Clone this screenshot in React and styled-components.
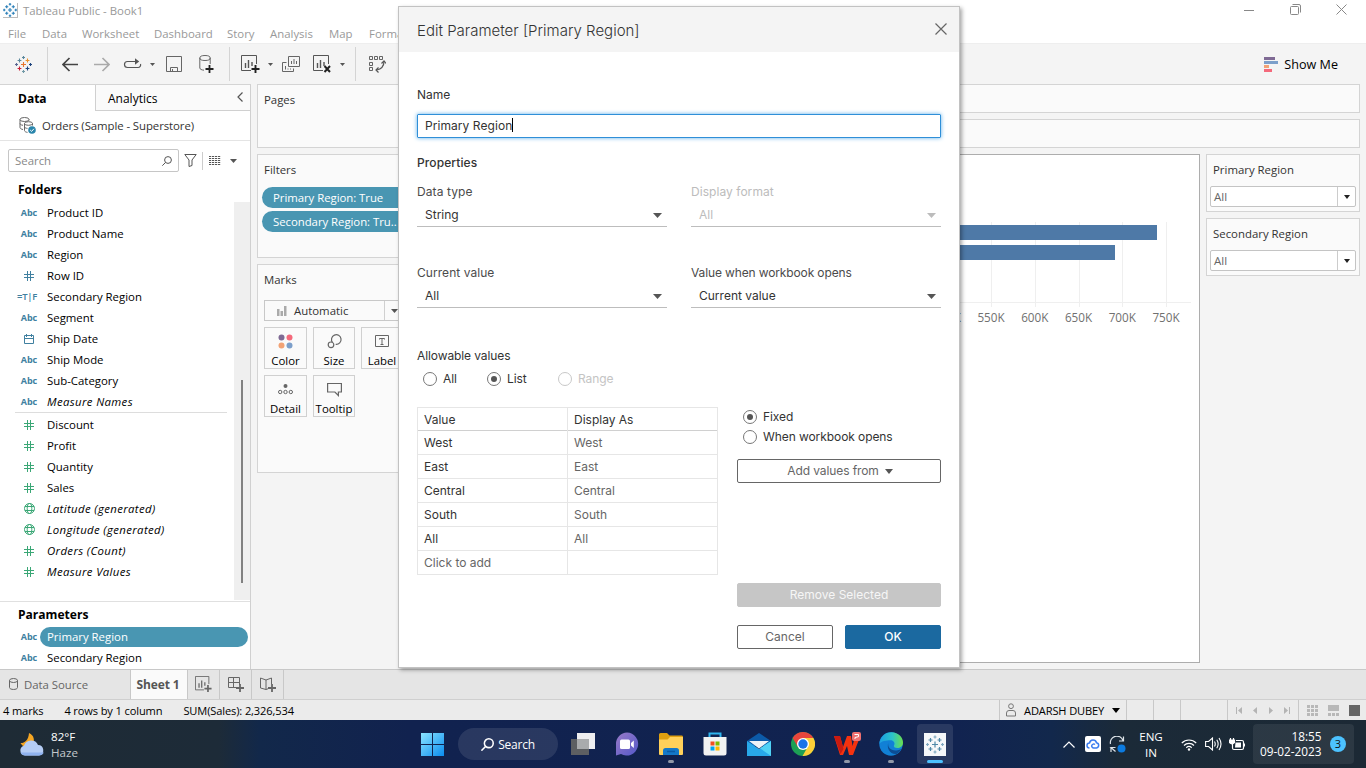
import React from "react";
import styled, { createGlobalStyle, css } from "styled-components";

const Global = createGlobalStyle`
  * { box-sizing: border-box; }
  html, body { margin: 0; padding: 0; overflow: hidden; }
  body { font-family: "Open Sans", "Noto Sans", sans-serif; font-size: 11.4px; color: #000; }
  svg { display: block; flex: none; }
`;

const Desktop = styled.div`
  position: relative;
  width: 1366px;
  height: 768px;
  display: flex;
  flex-direction: column;
  background: #f4f4f4;
  overflow: hidden;
  white-space: nowrap;
`;

/* ---------- window chrome ---------- */
const TitleBar = styled.div`
  height: 22px;
  background: #fff;
  display: flex;
  align-items: center;
  padding: 0 0 1px 3px;
  color: #999;
`;
const TitleIcon = styled.span`
  width: 15px;
  height: 15px;
  border-right: 1px solid #bbb;
  border-bottom: 1px solid #bbb;
  margin-right: 5px;
`;
const WindowButtons = styled.div`
  margin-left: auto;
  display: flex;
  padding: 0 2px 2px 0;
`;
const WindowButton = styled.span`
  width: 46px;
  height: 20px;
  display: flex;
  align-items: center;
  justify-content: center;
`;
const MenuBar = styled.div`
  height: 21px;
  background: #fff;
  display: grid;
  grid-template-columns: 34px 40px 72px 73px 43px 59px 40px 60px;
  align-items: center;
  padding: 2px 0 0 8px;
  color: #999;
`;
const ToolBar = styled.div`
  height: 41px;
  border-top: 1px solid #eee;
  display: flex;
  align-items: center;
`;
const Slot = styled.span`
  width: ${(p) => p.$w}px;
  display: flex;
  align-items: center;
  justify-content: center;
  flex: none;
`;
const ToolDivider = styled.span`
  width: 1px;
  height: 34px;
  margin: 0 ${(p) => p.$r || 0}px 0 ${(p) => p.$l || 0}px;
  background: #d4d4d4;
`;
const ShowMe = styled.div`
  margin-left: auto;
  display: flex;
  align-items: center;
  gap: 6px;
  padding-right: 28px;
  font-size: 12.6px;
`;

/* ---------- data pane ---------- */
const Body = styled.div`
  height: 585px;
  display: flex;
`;
const Side = styled.aside`
  width: 251px;
  background: #fff;
  border-right: 1px solid #d0d0d0;
  border-top: 1px solid #d4d4d4;
  display: flex;
  flex-direction: column;
`;
const SideTabs = styled.div`
  display: flex;
  height: 26px;
  font-size: 12px;
`;
const DataTab = styled.div`
  width: 95px;
  padding: 5px 0 0 18px;
  font-weight: 700;
  line-height: 17px;
`;
const AnalyticsTab = styled.div`
  flex: 1;
  padding: 5px 7px 0 12px;
  line-height: 17px;
  display: flex;
  justify-content: space-between;
  background: #fafafa;
  border-left: 1px solid #d0d0d0;
  border-bottom: 1px solid #d0d0d0;
  svg { margin-top: 2px; }
`;
const SourceRow = styled.div`
  height: 30px;
  border-bottom: 1px solid #e4e4e4;
  display: flex;
  align-items: center;
  gap: 6px;
  padding-left: 19px;
  color: #333;
  letter-spacing: -0.08px;
`;
const SearchRow = styled.div`
  display: flex;
  align-items: center;
  height: 23px;
  margin: 8px 0 0 8px;
`;
const SearchBox = styled.div`
  width: 171px;
  flex: none;
  height: 23px;
  border: 1px solid #c6c6c6;
  border-radius: 2px;
  display: flex;
  align-items: center;
  justify-content: space-between;
  padding: 0 6px;
  color: #888;
`;
const SmallDivider = styled.span`
  width: 1px;
  height: 18px;
  margin-right: 6px;
  background: #ccc;
`;
const PaneHeading = styled.div`
  font-weight: 700;
  font-size: 12.1px;
  letter-spacing: -0.02px;
  line-height: 20px;
  padding-left: 18px;
  margin-top: ${(p) => p.$mt}px;
`;
const FieldArea = styled.div`
  display: flex;
  justify-content: space-between;
  height: 399px;
  margin-top: 2px;
`;
const FieldList = styled.div`
  width: 227px;
`;
const ScrollTrack = styled.div`
  width: 16px;
  height: 398px;
  background: #efefef;
  padding: 178px 0 0 7px;
`;
const ScrollThumb = styled.div`
  width: 2px;
  height: 203px;
  background: #808080;
`;
const Field = styled.div`
  height: 21px;
  display: flex;
  align-items: center;
  font-style: ${(p) => (p.$italic ? "italic" : "normal")};
  letter-spacing: ${(p) => (p.$italic ? "0.36px" : "0")};
`;
const FieldIcon = styled.span`
  width: 46px;
  padding-left: 12px;
  display: flex;
  justify-content: center;
  color: ${(p) => (p.$green ? "#3ba776" : "#4080a0")};
  font: normal ${(p) => (p.$thin ? "600 9.5px" : "700 9px")} "Open Sans", sans-serif;
  letter-spacing: ${(p) => (p.$thin ? "-0.3px" : "0")};
  margin: 0 ${(p) => (p.$thin ? 3 : 1)}px 0 ${(p) => (p.$thin ? -2 : 0)}px;
`;
const FieldDivider = styled.div`
  height: 1px;
  margin: 0 0 1px 15px;
  background: #ddd;
`;
const ParamPane = styled.div`
  flex: 1;
  border-top: 1px solid #e0e0e0;
`;
const ParamRows = styled.div`
  padding-top: 1px;
`;
const SelectedPill = styled.span`
  width: 208px;
  height: 20px;
  line-height: 20px;
  margin-left: -7px;
  padding-left: 7px;
  border-radius: 10px;
  background: #4996b2;
  color: #fff;
`;

/* ---------- shelves ---------- */
const Shelves = styled.div`
  width: 153px;
  margin-left: 6px;
`;
const Card = styled.section`
  background: #fafafa;
  border: 1px solid #d4d4d4;
  height: ${(p) => p.$h}px;
  margin-bottom: 6px;
  color: #333;
`;
const CardTitle = styled.div`
  padding: 6px 0 0 6px;
  line-height: 18px;
`;
const Pills = styled.div`
  padding: 8px 0 0 4px;
  display: flex;
  flex-direction: column;
  gap: 3px;
`;
const Pill = styled.div`
  height: 21px;
  line-height: 21px;
  padding-left: 11px;
  border-radius: 11px 0 0 11px;
  background: #4996b2;
  color: #fff;
  letter-spacing: -0.05px;
`;
const MarkType = styled.div`
  margin: 11px 5px 6px 6px;
  height: 21px;
  border: 1px solid #c8c8c8;
  display: flex;
  align-items: center;
  padding-left: 12px;
`;
const MarkName = styled.span`
  flex: 1;
  padding-left: 7px;
  height: 19px;
  line-height: 19px;
`;
const MarkCaret = styled.span`
  width: 19px;
  height: 19px;
  border-left: 1px solid #d0d0d0;
  display: flex;
  align-items: center;
  justify-content: center;
`;
const MarkGrid = styled.div`
  display: grid;
  grid-template-columns: 43px 42px 42px;
  gap: 6px;
  margin-left: 6px;
`;
const MarkButton = styled.div`
  height: 42px;
  border: 1px solid #d0d0d0;
  display: flex;
  flex-direction: column;
  align-items: center;
  color: #000;
  padding-top: 5px;
  line-height: 20px;
  svg { margin-bottom: 2px; }
`;

/* ---------- sheet ---------- */
const Work = styled.div`
  width: 950px;
`;
const Shelf = styled.div`
  height: 29px;
  border: 1px solid #d4d4d4;
  background: #fafafa;
  margin-bottom: 6px;
`;
const SheetRow = styled.div`
  display: flex;
  gap: 6px;
`;
const View = styled.div`
  width: 790px;
  height: 509px;
  background: #fff;
  border: 1px solid #adadad;
`;
const AxisText = styled.text`
  font: 11.7px "Open Sans", sans-serif;
  fill: #707070;
  text-anchor: middle;
`;
const ParamCards = styled.div`
  width: 154px;
`;
const ParamCard = styled(Card)`
  height: 58px;
`;
const Combo = styled.div`
  margin: 7px 3px 0;
  height: 21px;
  border: 1px solid #c4c4c4;
  border-radius: 2px;
  background: #fff;
  display: flex;
  padding-left: 3px;
  line-height: 19px;
  font-size: 11.5px;
  color: #666;
`;
const ComboCaret = styled.span`
  margin-left: auto;
  width: 18px;
  border-left: 1px solid #ccc;
  display: flex;
  align-items: center;
  justify-content: center;
`;

/* ---------- sheet tabs and status ---------- */
const TabBar = styled.div`
  height: 30px;
  background: #e5e5e5;
  border-top: 1px solid #c8c8c8;
  display: flex;
`;
const SourceTab = styled.div`
  width: 130px;
  display: flex;
  align-items: center;
  gap: 6px;
  padding: 0 0 1px 9px;
  color: #666;
  font-size: 11.4px;
  letter-spacing: -0.05px;
`;
const SheetTab = styled.div`
  width: 58px;
  border: solid #c8c8c8;
  border-width: 0 1px;
  padding-right: 2px;
  background: #fafafa;
  line-height: 29px;
  text-align: center;
  font-weight: 700;
  font-size: 12px;
  letter-spacing: -0.15px;
  color: #555;
`;
const NewTab = styled.div`
  width: 32px;
  border-right: 1px solid #c8c8c8;
  display: flex;
  align-items: center;
  justify-content: center;
`;
const StatusBar = styled.div`
  height: 21px;
  border-top: 1px solid #cfcfcf;
  background: #ebebeb;
  display: flex;
  align-items: center;
  padding-left: 3px;
  gap: 21px;
  font-size: 11.1px;
  letter-spacing: -0.13px;
`;
const StatusCells = styled.div`
  margin-left: auto;
  display: flex;
  height: 20px;
`;
const StatusCell = styled.div`
  width: ${(p) => p.$w}px;
  border-left: 1px solid #c8c8c8;
  display: flex;
  align-items: center;
  padding-left: ${(p) => p.$pl || 0}px;
  gap: ${(p) => p.$gap || 0}px;
`;

/* ---------- taskbar ---------- */
const Taskbar = styled.div`
  height: 48px;
  display: flex;
  align-items: center;
  color: #fff;
  background: linear-gradient(90deg, #1e2b35 0, #1d2b38 16%, #12284a 19%, #11224f 30%, #112350 70%, #12284c 77%, #1b2a38 82%, #1c2935 100%);
`;
const Weather = styled.div`
  width: 410px;
  padding: 1px 0 0 19px;
  display: flex;
  gap: 6px;
  align-items: center;
  line-height: 16px;
  font-size: 11.6px;
`;
const Muted = styled.div`
  color: #c4c8cc;
`;
const TaskSearch = styled.div`
  width: 100px;
  height: 32px;
  margin: 0 3px 0 4px;
  border-radius: 16px;
  background: rgba(255, 255, 255, 0.1);
  display: flex;
  align-items: center;
  justify-content: center;
  gap: 4px;
  font-size: 12px;
  letter-spacing: -0.25px;
`;
const TaskItem = styled.div`
  width: 36px;
  height: 40px;
  margin: 0 4px;
  border-radius: 4px;
  position: relative;
  display: flex;
  align-items: center;
  justify-content: center;
  background: ${(p) => (p.$active ? "rgba(255,255,255,0.1)" : "none")};
  ${(p) =>
    p.$run &&
    css`
      &::after {
        content: "";
        position: absolute;
        left: 50%;
        bottom: 1px;
        width: ${p.$active ? 16 : 6}px;
        height: 3px;
        border-radius: 2px;
        transform: translateX(-50%);
        background: ${p.$active ? "#4cc2ff" : "#9098a8"};
      }
    `}
`;
const Tray = styled.div`
  margin-left: auto;
  display: flex;
  align-items: center;
`;
const TraySlot = styled(Slot)`
  padding-left: ${(p) => p.$shift || 0}px;
`;
const Lang = styled.div`
  width: 44px;
  text-align: center;
  line-height: 16px;
  padding-top: 1px;
  font-size: 11.6px;
`;
const ClockBox = styled.div`
  width: 101px;
  height: 40px;
  margin: 0 12px 0 4px;
  padding: 0 8px 0 7px;
  border-radius: 4px;
  background: rgba(255, 255, 255, 0.07);
  display: flex;
  align-items: center;
  justify-content: space-between;
  text-align: right;
  line-height: 15.5px;
  font-size: 11.8px;
`;
const Badge = styled.span`
  width: 16px;
  height: 16px;
  border-radius: 8px;
  background: #4cc2ff;
  color: #111;
  font-size: 11px;
  line-height: 16px;
  text-align: center;
`;

/* ---------- dialog ---------- */
const Dialog = styled.div`
  position: absolute;
  left: 398px;
  top: 6px;
  width: 562px;
  height: 662px;
  border: 1px solid #c2c2c2;
  background: #fff;
  box-shadow: 2px 2px 4px rgba(0, 0, 0, 0.35);
  font-family: Inter, Roboto, sans-serif;
  font-size: 12px;
  color: #333;
`;
const DialogHeader = styled.div`
  height: 45px;
  background: #f4f4f4;
  display: flex;
  align-items: center;
  justify-content: space-between;
  padding: 2px 12px 0 18px;
  font-size: 15px;
  font-weight: 300;
  svg { margin-top: -3px; }
`;
const DialogBody = styled.div`
  padding: 33px 18px 0;
`;
const Label = styled.div`
  height: 20px;
  line-height: ${(p) => (p.$strong ? 22 : 20)}px;
  color: ${(p) => (p.$disabled ? "#bcbcbc" : p.$soft ? "#4b4b4b" : "#333")};
  font-weight: ${(p) => (p.$strong ? 500 : 400)};
  letter-spacing: ${(p) => p.$ls || 0}px;
  margin-top: ${(p) => p.$mt || 0}px;
`;
const NameInput = styled.div`
  margin-top: 9px;
  height: 24px;
  border: 1px solid #2f8fd8;
  box-shadow: 0 0 4px #5fb0ea;
  border-radius: 1px;
  display: flex;
  align-items: center;
  padding: 0 0 2px 7px;
  letter-spacing: 0.06px;
`;
const Cursor = styled.span`
  width: 1px;
  height: 14px;
  background: #000;
`;
const Pair = styled.div`
  display: grid;
  grid-template-columns: 250px 250px;
  gap: 24px;
  margin-top: ${(p) => p.$mt}px;
`;
const Select = styled.div`
  height: 25px;
  border-bottom: 1px solid #bdbdbd;
  display: flex;
  align-items: center;
  justify-content: space-between;
  padding: 0 5px 0 8px;
  color: ${(p) => (p.$disabled ? "#bcbcbc" : "#333")};
  svg { margin-top: 2px; }
`;
const Radios = styled.div`
  display: flex;
  height: 16px;
  margin: 5px 0 0 6px;
`;
const Radio = styled.div`
  display: flex;
  align-items: center;
  gap: 6px;
  width: ${(p) => (p.$w ? p.$w + "px" : "auto")};
  height: ${(p) => p.$h || 16}px;
  color: ${(p) => (p.$disabled ? "#c4c4c4" : "#333")};
  padding-left: ${(p) => p.$pl || 0}px;
`;
const RadioText = styled.span`
  padding-bottom: 1px;
  letter-spacing: -0.08px;
`;
const RadioDot = styled.span`
  width: 14px;
  height: 14px;
  border-radius: 7px;
  border: 1px solid ${(p) => (p.$disabled ? "#c8c8c8" : "#777")};
  display: flex;
  align-items: center;
  justify-content: center;
  &::after {
    content: "";
    width: 6px;
    height: 6px;
    border-radius: 3px;
    background: ${(p) => (p.$on ? "#555" : "none")};
  }
`;
const Split = styled.div`
  display: flex;
  margin-top: 20px;
  justify-content: space-between;
`;
const ValueTable = styled.div`
  width: 301px;
  height: 168px;
  border: 1px solid #e6e6e6;
`;
const ValueRow = styled.div`
  display: grid;
  grid-template-columns: 149px 1fr;
  height: ${(p) => (p.$head ? 23 : 24)}px;
  border-bottom: 1px solid ${(p) => (p.$head ? "#d0d0d0" : "#e6e6e6")};
  line-height: 24px;
  &:last-child { border-bottom: 0; height: 23px; }
`;
const Cell = styled.div`
  padding-left: 6px;
  color: ${(p) => (p.$soft ? "#666" : "#333")};
  & + & { border-left: 1px solid #e6e6e6; }
`;
const Actions = styled.div`
  width: 204px;
`;
const Button = styled.div`
  height: 24px;
  flex: 1;
  border-radius: 2px;
  border: 1px solid #666;
  display: flex;
  align-items: center;
  justify-content: center;
  gap: 6px;
  padding-bottom: 2px;
  color: #666;
  margin-top: ${(p) => p.$mt || 0}px;
  svg { margin-top: 3px; }
  ${(p) => p.$kind === "menu" && "letter-spacing:-0.1px;padding-left:2px;"}
  ${(p) => p.$kind === "disabled" && "background:#c6c6c6;border-color:#c6c6c6;color:#f6f6f6;"}
  ${(p) => p.$kind === "primary" && "background:#1b69a0;border-color:#1b69a0;color:#fff;font-weight:500;"}
`;
const ButtonRow = styled.div`
  display: flex;
  gap: 12px;
  margin-top: 18px;
`;

/* ---------- icons ---------- */
const plus = (x, y, r) => `M${x - r} ${y}h${2 * r}M${x} ${y - r}v${2 * r}`;

const TableauMark = ({ size, colors = ["#2a7fa8"] }) => {
  const c = (i) => colors[i % colors.length];
  const pts = [
    [8.5, 8.5, 2.5], [4.5, 4.5, 1.9], [12.5, 4.5, 1.9], [4.5, 12.5, 1.9], [12.5, 12.5, 1.9],
    [8.5, 1.5, 1.5], [15.5, 8.5, 1.5], [8.5, 15.5, 1.5], [1.5, 8.5, 1.5],
  ];
  return (
    <svg width={size} height={size} viewBox="0 0 17 17" fill="none" strokeWidth={size < 17 ? 1.4 : 1.1}>
      {pts.map(([x, y, r], i) => <path key={i} d={plus(x, y, r)} stroke={c(i)} />)}
    </svg>
  );
};
const Caret = ({ w = 8, h = 5, color = "#555" }) => (
  <svg width={w} height={h} viewBox="0 0 8 5" preserveAspectRatio="none"><path d="M0 0h8L4 5z" fill={color} /></svg>
);
const Arrow = ({ flip, color }) => (
  <svg width="16" height="15" viewBox="0 0 16 15" fill="none" stroke={color} strokeWidth="1.7">
    <path d={flip ? "M0 7.5h14.8M8.500 1l6.500 6.500L8.500 14" : "M16 7.500H1.200M7.500 1L1 7.500 7.500 14"} />
  </svg>
);
const Replay = () => (
  <svg width="19" height="12" viewBox="0 0 19 12" fill="none" stroke="#555" strokeWidth="1.2">
    <path d="M14 3.500H4.500a3 3 0 0 0 0 6h10.500a2.600 2.600 0 0 0 2.500-3.500" /><path d="M12 .3l4.200 3.200L12 6.700z" fill="#555" stroke="none" />
  </svg>
);
const Save = () => (
  <svg width="16" height="16" viewBox="0 0 16 16" fill="none" stroke="#666">
    <path d="M.5.5h15v15H.5zM4.5 15.500v-4h7v4M6.500 13v2" />
  </svg>
);
const DbPlus = () => (
  <svg width="15" height="18" viewBox="0 0 15 18" fill="none" stroke="#666">
    <ellipse cx="6" cy="3" rx="5.200" ry="2.500" /><path d="M.8 3v10c0 1.200 2 2 4.200 2.200M11.200 3v6" />
    <path d="M10.500 10v8M6.500 14h8" stroke="#222" strokeWidth="1.800" />
  </svg>
);
const SheetBars = ({ mark, size = 19, color = "#555" }) => (
  <svg width={size} height={size} viewBox="0 0 19 19" fill="none" stroke={color}>
    <path d="M10 15.500H.5V.5h15V9" /><path d="M4.500 8v5M7.500 5v8M11 7v4" strokeWidth="1.400" />
    {mark === "x" ? <path d="M11.500 11l5.500 6M17 11l-5.500 6" stroke="#222" strokeWidth="2" />
      : <path d="M14.500 10v8M10.500 14h8" stroke={color === "#555" ? "#222" : color} strokeWidth="1.900" />}
  </svg>
);
const Duplicate = () => (
  <svg width="18" height="17" viewBox="0 0 18 17" fill="none" stroke="#666">
    <path d="M6.500.5h11v10h-11zM4.500 6.500h-4v9h11v-3" /><path d="M9.500 8V5M12 8V3M14.500 8V5M3.500 13.500V10M6 13.500v-1M8.500 13.500v-1" />
  </svg>
);
const Swap = () => (
  <svg width="17" height="17" viewBox="0 0 17 17" fill="none" stroke="#555">
    <path d="M.5.5h3v3h-3zM5.500.5h3v3h-3zM10.500.5h3v3h-3zM.5 6.500h3v3h-3zM.5 11.500h3v3h-3z" strokeWidth=".9" />
    <path d="M15 5.500c0 4-2.500 7.500-7.500 8.500" strokeWidth="1.200" /><path d="M12.500 7.500L15 5l2 2.500M9.500 11.500L7 14l2.500 2.500" strokeWidth="1.200" />
  </svg>
);
const SourceIcon = () => (
  <svg width="17" height="17" viewBox="0 0 17 17" fill="none" stroke="#666">
    <ellipse cx="5.500" cy="2.500" rx="4.500" ry="2" /><path d="M1 2.500v8c0 1 1.500 1.800 3 2M10 2.500v1M1 6.500c0 1 1 1.500 3 1.800" />
    <ellipse cx="9.500" cy="6.500" rx="4" ry="1.800" fill="#fff" /><path d="M5.500 6.500v7c0 1 1.500 1.700 3 1.900M13.500 6.500v2M5.500 10c.3.800 1.500 1.300 3 1.400" />
    <circle cx="13" cy="13" r="3.800" fill="#2a86ac" stroke="none" /><path d="M11.200 13l1.400 1.400 2.300-2.600" stroke="#fff" />
  </svg>
);
const Magnifier = ({ size = 10, color = "#555", w = 1 }) => (
  <svg width={size} height={size} viewBox="0 0 10 10" fill="none" stroke={color} strokeWidth={w}>
    <circle cx="6" cy="4" r="3.400" /><path d="M3.500 6.500L.3 9.700" />
  </svg>
);
const Funnel = () => (
  <svg width="13" height="13" viewBox="0 0 13 13" fill="none" stroke="#555"><path d="M.8.5h11.400L8 6v5.500L5 12.500V6z" /></svg>
);
const Columns = () => (
  <svg width="12" height="9" viewBox="0 0 12 9" fill="#555">
    {[0, 2, 4, 6, 8].map((y) => [0, 3, 6, 9].map((x) => <rect key={x + "-" + y} x={x} y={y} width="2.200" height="1" />))}
  </svg>
);
const Hash = () => (
  <svg width="10" height="10" viewBox="0 0 10 10" stroke="currentColor"><path d="M0 3.500h10M0 6.500h10M3.500 0v10M6.500 0v10" /></svg>
);
const Calendar = () => (
  <svg width="10" height="10" viewBox="0 0 10 10" fill="none" stroke="currentColor"><path d="M.5 1.500h9v8h-9zM.5 4.500h9M2.500 0v3M7.500 0v3" /></svg>
);
const Globe = () => (
  <svg width="11" height="11" viewBox="0 0 11 11" fill="none" stroke="currentColor"><circle cx="5.500" cy="5.500" r="5" /><ellipse cx="5.500" cy="5.500" rx="2.300" ry="5" /><path d="M1 3.500h9M1 7.500h9" /></svg>
);
const MiniBars = () => (
  <svg width="10" height="10" viewBox="0 0 10 10" fill="#aaa"><path d="M0 3h2.500v7H0zM3.500 5h2.500v5H3.500zM7 0h2.500v10H7z" /></svg>
);
const markIcons = {
  Color: (
    <svg width="15" height="16" viewBox="0 0 15 16"><circle cx="3.500" cy="4.500" r="3" fill="#7f6a94" /><circle cx="11.500" cy="4.500" r="3" fill="#f4697b" /><circle cx="3.500" cy="12.500" r="3" fill="#f2a275" /><circle cx="11.500" cy="12.500" r="3" fill="#7c9fca" /></svg>
  ),
  Size: (
    <svg width="15" height="16" viewBox="0 0 15 16" fill="none" stroke="#666" strokeWidth="1.200"><path d="M5.500 9.500a4.800 4.800 0 1 1 3.200 1.800" /><circle cx="4" cy="11.800" r="2.800" /></svg>
  ),
  Label: (
    <svg width="14" height="16" viewBox="0 0 14 16" fill="none" stroke="#666"><path d="M.5 2.500h13v11H.5zM4.500 6.500v-1h5v1M7 5.500v6M5.500 11.500h3" /></svg>
  ),
  Detail: (
    <svg width="15" height="16" viewBox="0 0 15 16" fill="none" stroke="#666"><circle cx="7.500" cy="5" r="2" fill="#666" stroke="none" /><circle cx="2.200" cy="11" r="1.700" /><circle cx="7.500" cy="11" r="1.700" /><circle cx="12.800" cy="11" r="1.700" /></svg>
  ),
  Tooltip: (
    <svg width="15" height="16" viewBox="0 0 15 16" fill="none" stroke="#666" strokeWidth="1.200"><path d="M.6 2.500h13.800v8.500h-3v3.500l-3.500-3.500H.6z" /></svg>
  ),
};

const fields = [
  ["abc", "Product ID"], ["abc", "Product Name"], ["abc", "Region"], ["hash", "Row ID"],
  ["tf", "Secondary Region"], ["abc", "Segment"], ["cal", "Ship Date"], ["abc", "Ship Mode"],
  ["abc", "Sub-Category"], ["abc", "Measure Names", true],
];
const measures = [
  ["hash", "Discount"], ["hash", "Profit"], ["hash", "Quantity"], ["hash", "Sales"],
  ["globe", "Latitude (generated)", true], ["globe", "Longitude (generated)", true],
  ["hash", "Orders (Count)", true], ["hash", "Measure Values", true],
];
const glyph = { abc: "Abc", tf: "=T|F", hash: <Hash />, cal: <Calendar />, globe: <Globe /> };

const FieldRow = ({ type, name, italic, green, selected }) => (
  <Field $italic={italic}>
    <FieldIcon $green={green} $thin={type === "tf"}>{glyph[type]}</FieldIcon>
    {selected ? <SelectedPill>{name}</SelectedPill> : name}
  </Field>
);

const Chart = () => (
  <svg width="788" height="200" viewBox="411 155 788 200">
    <g stroke="#efefef">
      {[947.5, 991.5, 1035.5, 1079.5, 1122.5, 1166.5].map((x) => <path key={x} d={`M${x} 222v85`} />)}
      <path d="M510 302.500H1191" />
    </g>
    <rect x="510" y="225" width="647" height="15" fill="#4e79a7" />
    <rect x="510" y="245" width="605" height="15" fill="#4e79a7" />
    {["500K", "550K", "600K", "650K", "700K", "750K"].map((t, i) => (
      <AxisText key={t} x={947.3 + i * 43.75} y="322">{t}</AxisText>
    ))}
  </svg>
);

const task = {
  windows: <svg width="23" height="23" viewBox="0 0 23 23"><defs><linearGradient id="win" x2="1" y2="1"><stop stopColor="#8be4ff" /><stop offset="1" stopColor="#0a8cf0" /></linearGradient></defs><path d="M0 0h11v11H0zM12 0h11v11H12zM0 12h11v11H0zM12 12h11v11H12z" fill="url(#win)" /></svg>,
  view: <svg width="24" height="23" viewBox="0 0 24 23"><path d="M6 0h18v16H6z" fill="#eeeef0" /><path d="M0 6h18v16H0z" fill="#5d5f62" /><path d="M6 6h12v10H6z" fill="#a9abad" /></svg>,
  chat: <svg width="24" height="24" viewBox="0 0 24 24"><defs><linearGradient id="cht" x2="1" y2="1"><stop stopColor="#9a7bc8" /><stop offset="1" stopColor="#5358c8" /></linearGradient></defs><path d="M12 .5A11.500 11.500 0 1 1 6 22L1 23.500V12A11.300 11.300 0 0 1 12 .5z" fill="url(#cht)" /><rect x="5" y="7.500" width="10" height="9.500" rx="1.500" fill="#fff" /><path d="M16 11l2.800-2.500v7.500L16 13.500z" fill="#fff" /></svg>,
  folder: <svg width="24" height="22" viewBox="0 0 24 22"><path d="M0 1.500Q0 0 1.500 0H8l2.500 2.500H23Q24 2.500 24 4v5H0z" fill="#e0a010" /><path d="M0 6.500h8.500L11 4h13v17q0 1-1 1H1q-1 0-1-1z" fill="#ffd05a" /><path d="M4 22v-4.500Q4 15 6.500 15h11q2.500 0 2.500 2.500V22z" fill="#1478c8" /><path d="M8 18.500h8" stroke="#0a5aa5" strokeWidth="1.500" /></svg>,
  store: <svg width="24" height="24" viewBox="0 0 24 24"><path d="M6.500 6V1.500h11V6" fill="none" stroke="#2fb4ee" strokeWidth="2" /><path d="M.5 5h23v16q0 2.500-2.500 2.500H3Q.5 23.500.5 21z" fill="#f2f2f2" /><path d="M7.500 9.500h4v4h-4z" fill="#f25022" /><path d="M12.500 9.500h4v4h-4z" fill="#7fba00" /><path d="M7.500 14.500h4v4h-4z" fill="#00a4ef" /><path d="M12.500 14.500h4v4h-4z" fill="#ffb900" /></svg>,
  mail: <svg width="24" height="23" viewBox="0 0 24 23"><path d="M0 8L12 0l12 8v5H0z" fill="#0c5aa8" /><path d="M0 8l12 8L24 8v15H0z" fill="#28a8ea" /><path d="M2 8h20L12 15.500z" fill="#eef3f8" /><path d="M13 15.300L24 8v15z" fill="#50d2f5" /></svg>,
  chrome: <svg width="24" height="24" viewBox="0 0 24 24"><circle cx="12" cy="12" r="12" fill="#1da055" /><path d="M12 12L1.600 6A12 12 0 0 1 22.400 6z" fill="#e8453c" /><path d="M12 6h10.400A12 12 0 0 1 11.500 24L17 14.500z" fill="#fdd038" /><path d="M1.600 6l5.300 9L12 6z" fill="#e8453c" /><circle cx="12" cy="12" r="6" fill="#fff" /><circle cx="12" cy="12" r="4.700" fill="#1a73e8" /></svg>,
  wps: <svg width="27" height="24" viewBox="0 0 27 24"><path d="M0 4h6l3 11 4-11h4l1.500 10L21 5h5l-7 18h-4l-2-9-4 9H6z" fill="#f5320f" /><path d="M0 4h6l3.500 13L6.500 22z" fill="#c91a10" /><rect x="18" y="0" width="9" height="9" rx="2" fill="#f07070" /><path d="M20.500 2.500h4v2.200l-3.500.8v1.500" fill="none" stroke="#fff" /></svg>,
  edge: <svg width="24" height="24" viewBox="0 0 24 24"><defs><linearGradient id="edg"><stop stopColor="#1b9de2" /><stop offset=".55" stopColor="#2cc3c9" /><stop offset="1" stopColor="#6bdf4c" /></linearGradient></defs><circle cx="12" cy="12" r="11.700" fill="#1180d6" /><path d="M.4 12C1 5 6 .3 12.500.3 19.500.3 24 5.500 24 10.500c0 4.200-3 5.500-5.500 5.500-3 0-4.200-1.500-3.500-2.800 1.500-2.200-.5-5-3.500-5C7 8.200 2 9 .4 12z" fill="url(#edg)" /><path d="M9.500 10.500c-1.500 4 2 8.500 8 8 1.500-.2 3-.8 5-1.500-1.500 2-3 4-5 5-6 1-10.500-6-8-11.500z" fill="#0c4d94" /></svg>,
  tableau: <svg width="22" height="23" viewBox="-2 -2.500 22 23"><path d="M-2-2.500h22v23H-2z" fill="#f6f8fa" /><g stroke="#4f89a8" strokeWidth="1.200"><path d={plus(9, 9, 3)} /><path d={plus(4.500, 4.500, 2) + plus(13.500, 4.500, 2) + plus(4.500, 13.500, 2) + plus(13.500, 13.500, 2)} /><path d={plus(9, 1.500, 1.500) + plus(9, 16.500, 1.500) + plus(1.500, 9, 1.500) + plus(16.500, 9, 1.500)} opacity=".7" /></g></svg>,
};

const Tick = ({ on, disabled, children, ...rest }) => (
  <Radio $disabled={disabled} {...rest}><RadioDot $on={on} $disabled={disabled} /><RadioText>{children}</RadioText></Radio>
);
const SelectField = ({ label, value, disabled, ls }) => (
  <div>
    <Label $soft $disabled={disabled} $ls={ls}>{label}</Label>
    <Select $disabled={disabled}>{value}<Caret w={9} h={5} color={disabled ? "#bcbcbc" : "#555"} /></Select>
  </div>
);

const EditParameter = () => (
  <Dialog>
    <DialogHeader>
      Edit Parameter [Primary Region]
      <svg width="12" height="12" viewBox="0 0 12 12" stroke="#666" strokeWidth="1.200"><path d="M.5.5l11 11M11.500.5l-11 11" /></svg>
    </DialogHeader>
    <DialogBody>
      <Label>Name</Label>
      <NameInput>Primary Region<Cursor /></NameInput>
      <Label $strong $mt={14} $ls={0.1}>Properties</Label>
      <Pair $mt={10}>
        <SelectField label="Data type" value="String" ls={0.1} />
        <SelectField label="Display format" value="All" disabled ls={0.05} />
      </Pair>
      <Pair $mt={36}>
        <SelectField label="Current value" value="All" ls={0.05} />
        <SelectField label="Value when workbook opens" value="Current value" ls={-0.13} />
      </Pair>
      <Label $mt={38} $ls={-0.1}>Allowable values</Label>
      <Radios>
        <Tick $w={64}>All</Tick>
        <Tick $w={71} on>List</Tick>
        <Tick disabled>Range</Tick>
      </Radios>
      <Split>
        <ValueTable>
          <ValueRow $head><Cell>Value</Cell><Cell>Display As</Cell></ValueRow>
          {["West", "East", "Central", "South", "All"].map((v) => (
            <ValueRow key={v}><Cell>{v}</Cell><Cell $soft>{v}</Cell></ValueRow>
          ))}
          <ValueRow><Cell $soft>Click to add</Cell><Cell /></ValueRow>
        </ValueTable>
        <Actions>
          <Tick on $h={20} $pl={6}>Fixed</Tick>
          <Tick $h={20} $pl={6}>When workbook opens</Tick>
          <Button $mt={12} $kind="menu">Add values from <Caret w={8} h={5} /></Button>
          <Button $mt={100} $kind="disabled">Remove Selected</Button>
          <ButtonRow><Button>Cancel</Button><Button $kind="primary">OK</Button></ButtonRow>
        </Actions>
      </Split>
    </DialogBody>
  </Dialog>
);

export default function App() {
  return (
    <Desktop>
      <Global />
      <TitleBar>
        <TitleIcon><TableauMark size={14} colors={["#2a7fb8"]} /></TitleIcon>
        Tableau Public - Book1
        <WindowButtons>
          <WindowButton><svg width="10" height="10" stroke="#888"><path d="M0 5.500h10" /></svg></WindowButton>
          <WindowButton><svg width="11" height="11" viewBox="0 0 11 11" fill="none" stroke="#888"><rect x=".5" y="2.500" width="8" height="8" rx="1" /><path d="M2.500.5H9q1.500 0 1.500 1.500v6.500" /></svg></WindowButton>
          <WindowButton><svg width="11" height="11" viewBox="0 0 11 11" stroke="#888"><path d="M.5.5l10 10M10.500.5l-10 10" /></svg></WindowButton>
        </WindowButtons>
      </TitleBar>
      <MenuBar>
        {["File", "Data", "Worksheet", "Dashboard", "Story", "Analysis", "Map", "Format"].map((m) => <span key={m}>{m}</span>)}
      </MenuBar>
      <ToolBar>
        <Slot $w={47}><TableauMark size={17} colors={["#e8762d", "#5b879b", "#eb9129", "#c72035", "#1f457e", "#5b879b", "#1f457e", "#7199a6", "#5b6591"]} /></Slot>
        <ToolDivider $r={6} />
        <Slot $w={32}><Arrow color="#444" /></Slot>
        <Slot $w={32}><Arrow flip color="#aaa" /></Slot>
        <Slot $w={28}><Replay /></Slot>
        <Slot $w={12}><Caret w={5} h={3} /></Slot>
        <Slot $w={32}><Save /></Slot>
        <Slot $w={32}><DbPlus /></Slot>
        <ToolDivider $l={7} $r={6} />
        <Slot $w={28}><SheetBars /></Slot>
        <Slot $w={12}><Caret w={5} h={3} /></Slot>
        <Slot $w={30}><Duplicate /></Slot>
        <Slot $w={32}><SheetBars mark="x" /></Slot>
        <Slot $w={8}><Caret w={5} h={3} /></Slot>
        <ToolDivider $l={9} $r={5} />
        <Slot $w={32}><Swap /></Slot>
        <ShowMe>
          <svg width="14" height="15" viewBox="0 0 14 15"><path d="M0 0h11v3H0z" fill="#7f6a94" /><path d="M0 4h14v3H0z" fill="#7c9fca" /><path d="M0 8h5v3H0z" fill="#f2a275" /><path d="M0 12h8v3H0z" fill="#f4697b" /></svg>
          Show Me
        </ShowMe>
      </ToolBar>

      <Body>
        <Side>
          <SideTabs>
            <DataTab>Data</DataTab>
            <AnalyticsTab>Analytics<svg width="6" height="10" viewBox="0 0 6 10" fill="none" stroke="#555" strokeWidth="1.200"><path d="M5.500.5L1 5l4.500 4.500" /></svg></AnalyticsTab>
          </SideTabs>
          <SourceRow><SourceIcon />Orders (Sample - Superstore)</SourceRow>
          <SearchRow>
            <SearchBox>Search<Magnifier /></SearchBox>
            <Slot $w={23}><Funnel /></Slot>
            <SmallDivider /><Slot $w={12}><Columns /></Slot><Slot $w={25}><Caret w={7} h={4} /></Slot>
          </SearchRow>
          <PaneHeading $mt={8}>Folders</PaneHeading>
          <FieldArea>
            <FieldList>
              {fields.map(([t, n, it]) => <FieldRow key={n} type={t} name={n} italic={it} />)}
              <FieldDivider />
              {measures.map(([t, n, it]) => <FieldRow key={n} type={t} name={n} italic={it} green />)}
            </FieldList>
            <ScrollTrack><ScrollThumb /></ScrollTrack>
          </FieldArea>
          <ParamPane>
            <PaneHeading $mt={3}>Parameters</PaneHeading>
            <ParamRows>
              <FieldRow type="abc" name="Primary Region" selected />
              <FieldRow type="abc" name="Secondary Region" />
            </ParamRows>
          </ParamPane>
        </Side>
        <Shelves>
          <Card $h={64}><CardTitle>Pages</CardTitle></Card>
          <Card $h={104}>
            <CardTitle>Filters</CardTitle>
            <Pills>
              <Pill>Primary Region: True</Pill>
              <Pill>Secondary Region: Tru..</Pill>
            </Pills>
          </Card>
          <Card $h={209}>
            <CardTitle>Marks</CardTitle>
            <MarkType><MiniBars /><MarkName>Automatic</MarkName><MarkCaret><Caret w={7} h={4} /></MarkCaret></MarkType>
            <MarkGrid>
              {["Color", "Size", "Label", "Detail", "Tooltip"].map((m) => <MarkButton key={m}>{markIcons[m]}{m}</MarkButton>)}
            </MarkGrid>
          </Card>
        </Shelves>
        <Work>
          <Shelf /><Shelf />
          <SheetRow>
            <View><Chart /></View>
            <ParamCards>
              {["Primary Region", "Secondary Region"].map((n) => (
                <ParamCard key={n}><CardTitle>{n}</CardTitle><Combo>All<ComboCaret><Caret w={6} h={4} color="#222" /></ComboCaret></Combo></ParamCard>
              ))}
            </ParamCards>
          </SheetRow>
        </Work>
      </Body>

      <TabBar>
        <SourceTab><svg width="9" height="12" viewBox="0 0 9 12" fill="none" stroke="#666"><ellipse cx="4.500" cy="2.500" rx="4" ry="2" /><path d="M.5 2.500v7c0 2.600 8 2.600 8 0v-7" /></svg>Data Source</SourceTab>
        <SheetTab>Sheet 1</SheetTab>
        <NewTab><SheetBars size={17} color="#666" /></NewTab>
        <NewTab><svg width="16" height="15" viewBox="0 0 16 15" fill="none" stroke="#666"><path d="M10 10.500H.5V.5h11V8M.5 5.500h11M5.500.5v10" /><path d="M12 7v8M8 11h8" strokeWidth="1.800" /></svg></NewTab>
        <NewTab><svg width="16" height="15" viewBox="0 0 16 15" fill="none" stroke="#666"><path d="M6 12.500L.5 11V1L6 3l5.500-2v6M6 3v9.500l2-.7" /><path d="M12 7v8M8 11h8" strokeWidth="1.800" /></svg></NewTab>
      </TabBar>
      <StatusBar>
        <span>4 marks</span><span>4 rows by 1 column</span><span>SUM(Sales): 2,326,534</span>
        <StatusCells>
          <StatusCell $w={127} $pl={6} $gap={8}>
            <svg width="10" height="14" viewBox="0 0 10 14" fill="none" stroke="#777"><circle cx="5" cy="3.200" r="2.400" /><path d="M.5 13V10Q.5 7.500 3 7.500h4q2.500 0 2.500 2.500v3z" /></svg>
            ADARSH DUBEY<Caret w={8} h={5} color="#000" />
          </StatusCell>
          <StatusCell $w={27} /><StatusCell $w={27} /><StatusCell $w={47} />
          <StatusCell $w={71} $pl={7} $gap={10}>
            <svg width="56" height="7" viewBox="0 0 56 7" fill="#b4b4b4"><path d="M1 0h1v7H1zM7 0v7L3 3.500zM22 0v7l-4-3.500zM34 0v7l4-3.500zM49 0v7l4-3.500zM54 0h1v7h-1z" /></svg>
          </StatusCell>
          <StatusCell $w={68} $pl={8}>
            <svg width="54" height="11" viewBox="0 0 54 11" fill="#b8b8b8"><path d="M0 0h3v3H0zM4 0h3v3H4zM8 0h3v3H8zM0 4h3v3H0zM4 4h3v3H4zM8 4h3v3H8zM0 8h3v3H0zM4 8h3v3H4zM8 8h3v3H8zM21 0h11v6H21zM21 8h3v3h-3zM25 8h3v3h-3zM29 8h3v3h-3z" /><path d="M42 0h11v11H42z" fill="#666" /></svg>
          </StatusCell>
        </StatusCells>
      </StatusBar>

      <Taskbar>
        <Weather>
          <svg width="26" height="26" viewBox="0 0 26 26"><path d="M10 1c5 2 6.500 8 3 12-3 3.500-9 3-11.500-2 3 .5 8-2 8.500-10z" fill="#f5a623" /><path d="M6 23.500a5 5 0 0 1-1-9.800 7.500 7.500 0 0 1 14-.7 5.300 5.300 0 0 1 1 10.500z" fill="#b5cdf5" /><path d="M1.500 20.500a5 5 0 0 0 4.500 3h14a5 5 0 0 0 4.800-3z" fill="#8fb2ee" /></svg>
          <div><div>82°F</div><Muted>Haze</Muted></div>
        </Weather>
        <TaskItem>{task.windows}</TaskItem>
        <TaskSearch><Magnifier size={13} color="#fff" w={1.2} />Search</TaskSearch>
        <TaskItem>{task.view}</TaskItem>
        <TaskItem>{task.chat}</TaskItem>
        <TaskItem $run>{task.folder}</TaskItem>
        <TaskItem>{task.store}</TaskItem>
        <TaskItem>{task.mail}</TaskItem>
        <TaskItem>{task.chrome}</TaskItem>
        <TaskItem $run>{task.wps}</TaskItem>
        <TaskItem $run>{task.edge}</TaskItem>
        <TaskItem $run $active>{task.tableau}</TaskItem>
        <Tray>
          <Slot $w={24}><svg width="12" height="7" viewBox="0 0 12 7" fill="none" stroke="#fff" strokeWidth="1.200"><path d="M.5 6.500L6 1l5.500 5.500" /></svg></Slot>
          <Slot $w={24}><svg width="16" height="16" viewBox="0 0 16 16"><rect width="16" height="16" rx="2" fill="#fff" /><path d="M4.500 12a2.500 2.500 0 0 1 0-5 3.600 3.600 0 0 1 7-.3 2.700 2.700 0 0 1 0 5.300H9a2 2 0 1 1 1-3.500" fill="none" stroke="#3b7df0" strokeWidth="1.500" /></svg></Slot>
          <Slot $w={24}><svg width="17" height="17" viewBox="0 0 17 17" fill="none" stroke="#dde3e8" strokeWidth="1.200"><path d="M1.500 8A6.500 6.500 0 0 1 14 4.500M14.500.5v4.500H10M6.500 15.500L2 11.500h4.500M2 11.500V16" /><circle cx="12.500" cy="12.500" r="4" fill="#0c7be0" stroke="none" /></svg></Slot>
          <Lang>ENG<br />IN</Lang>
          <TraySlot $w={28} $shift={3}><svg width="16" height="13" viewBox="0 0 16 13" fill="none" stroke="#fff" strokeWidth="1.200"><path d="M.8 5a10.200 10.200 0 0 1 14.400 0M3 7.500a7 7 0 0 1 10 0M5.300 9.700a3.900 3.900 0 0 1 5.400 0" /><circle cx="8" cy="11.500" r="1.200" fill="#fff" stroke="none" /></svg></TraySlot>
          <Slot $w={24}><svg width="17" height="14" viewBox="0 0 17 14" fill="none" stroke="#fff" strokeWidth="1.100"><path d="M.6 4.500h3L7.500 1v12L3.600 9.500h-3zM9.500 4.500q1.500 2.500 0 5M11.800 2.800q2.700 4.200 0 8.400M14 1q4 6 0 12" /></svg></Slot>
          <Slot $w={24}><svg width="16" height="13" viewBox="0 0 16 13" fill="none" stroke="#fff" strokeWidth="1.200"><path d="M7 2.500h6q1.500 0 1.500 1.500v6q0 1.500-1.500 1.500H5Q3.500 11.500 3.500 10V6M15.500 5.500v3" /><path d="M6.500 4.500H12v5H6z" fill="#fff" stroke="none" /><path d="M.5 2h5v2.500q-2.500 2.500-5 0zM1.500 0v2M4.500 0v2" fill="#fff" /></svg></Slot>
          <ClockBox><div>18:55<br />09-02-2023</div><Badge>3</Badge></ClockBox>
        </Tray>
      </Taskbar>
      <EditParameter />
    </Desktop>
  );
}
